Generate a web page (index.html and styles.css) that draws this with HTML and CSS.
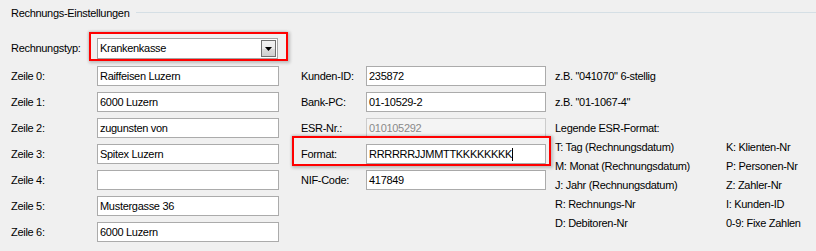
FILE: index.html
```html
<!DOCTYPE html>
<html lang="de">
<head>
<meta charset="utf-8">
<title>Rechnungs-Einstellungen</title>
<link rel="stylesheet" href="styles.css">
</head>
<body>
<div class="panel">
  <div class="group-head">
    <span class="group-title">Rechnungs-Einstellungen</span>
    <span class="group-line"></span>
  </div>

  <div class="typ-row">
    <span class="lbl">Rechnungstyp:</span>
    <div class="combo">
      <span class="combo-text">Krankenkasse</span>
      <span class="combo-btn"><svg width="7" height="4" viewBox="0 0 7 4"><path d="M0 0H7L3.5 4Z" fill="#000"/></svg></span>
    </div>
  </div>

  <div class="form">
    <div class="col col-left">
      <span class="lbl">Zeile 0:</span><div class="field">Raiffeisen Luzern</div>
      <span class="lbl">Zeile 1:</span><div class="field">6000 Luzern</div>
      <span class="lbl">Zeile 2:</span><div class="field">zugunsten von</div>
      <span class="lbl">Zeile 3:</span><div class="field">Spitex Luzern</div>
      <span class="lbl">Zeile 4:</span><div class="field"></div>
      <span class="lbl">Zeile 5:</span><div class="field">Mustergasse 36</div>
      <span class="lbl">Zeile 6:</span><div class="field">6000 Luzern</div>
    </div>

    <div class="col col-mid">
      <span class="lbl">Kunden-ID:</span><div class="field">235872</div>
      <span class="lbl">Bank-PC:</span><div class="field">01-10529-2</div>
      <span class="lbl">ESR-Nr.:</span><div class="field field-disabled">010105292</div>
      <span class="lbl">Format:</span><div class="field">RRRRRRJJMMTTKKKKKKKK<span class="caret"></span></div>
      <span class="lbl">NIF-Code:</span><div class="field">417849</div>
    </div>

    <div class="col-right">
      <div class="hint">z.B. &quot;041070&quot; 6-stellig</div>
      <div class="hint">z.B. &quot;01-1067-4&quot;</div>
      <div class="legend-head">Legende ESR-Format:</div>
      <div class="legend">
        <span>T: Tag (Rechnungsdatum)</span><span>K: Klienten-Nr</span>
        <span>M: Monat (Rechnungsdatum)</span><span>P: Personen-Nr</span>
        <span>J: Jahr (Rechnungsdatum)</span><span>Z: Zahler-Nr</span>
        <span>R: Rechnungs-Nr</span><span>I: Kunden-ID</span>
        <span>D: Debitoren-Nr</span><span>0-9: Fixe Zahlen</span>
      </div>
    </div>
  </div>

  <div class="mark mark-typ"></div>
  <div class="mark mark-format"></div>
</div>
</body>
</html>
```

FILE: styles.css
```css
* { box-sizing: border-box; }
html, body { margin: 0; padding: 0; }
body {
  background: #f0f0f0;
  font-family: "Liberation Sans", Arial, sans-serif;
  font-size: 11px;
  line-height: 13px;
  letter-spacing: -0.3px;
  color: #000;
  width: 816px;
  height: 251px;
  overflow: hidden;
}
.panel {
  position: relative;
  height: 251px;
  padding: 7px 0 0 11px;
}
.group-head {
  display: flex;
  height: 13px;
}
.group-title { white-space: nowrap; color: #000; }
.group-line {
  flex: 1;
  height: 1px;
  background: #d5dfe5;
  margin: 5px 0 0 7px;
}

.lbl { white-space: nowrap; }

.typ-row {
  display: flex;
  align-items: center;
  margin-top: 18px;
  height: 21px;
}
.typ-row .lbl { width: 86px; }
.combo {
  width: 181px;
  height: 21px;
  border: 1px solid #a5a5a5;
  background: #fff;
  display: flex;
  align-items: center;
  padding: 0 1px 0 2px;
}
.combo-text { flex: 1; white-space: nowrap; }
.combo-btn {
  width: 15px;
  height: 17px;
  border: 1px solid #707070;
  background: linear-gradient(#f2f2f2, #ebebeb 50%, #dddddd 50%, #cfcfcf);
  display: flex;
  align-items: center;
  justify-content: center;
}
.combo-btn svg { display: block; }

.form {
  display: flex;
  margin-top: 7px;
}
.col {
  display: grid;
  grid-auto-rows: 20px;
  row-gap: 6px;
  align-items: center;
}
.col-left { grid-template-columns: 86px 182px; }
.col-mid { grid-template-columns: 65px 180px; margin-left: 22px; align-content: start; }
.field {
  height: 20px;
  border: 1px solid #ababab;
  background: #fff;
  padding: 0 2px;
  line-height: 18px;
  white-space: nowrap;
  overflow: hidden;
}
.field-disabled {
  background: #f4f4f4;
  border-color: #cccccc;
  color: #8a8a8a;
}
.caret {
  display: inline-block;
  width: 1px;
  height: 13px;
  background: #000;
  vertical-align: -3px;
}

.col-right {
  margin-left: 9px;
  display: flex;
  flex-direction: column;
}
.hint { height: 20px; line-height: 20px; margin-bottom: 6px; white-space: nowrap; }
.legend-head { height: 20px; line-height: 20px; white-space: nowrap; }
.legend {
  display: grid;
  grid-template-columns: 171px auto;
  grid-auto-rows: 19px;
  line-height: 19px;
  white-space: nowrap;
}

.mark {
  position: absolute;
  border: 2px solid #ff0000;
  box-shadow: 1px 1px 3px 1px rgba(0, 0, 0, 0.22), -1px -1px 2px rgba(0, 0, 0, 0.08);
  pointer-events: none;
}
.mark-typ { left: 89px; top: 32px; width: 199px; height: 29px; }
.mark-format { left: 292px; top: 136px; width: 259px; height: 30px; }
```
